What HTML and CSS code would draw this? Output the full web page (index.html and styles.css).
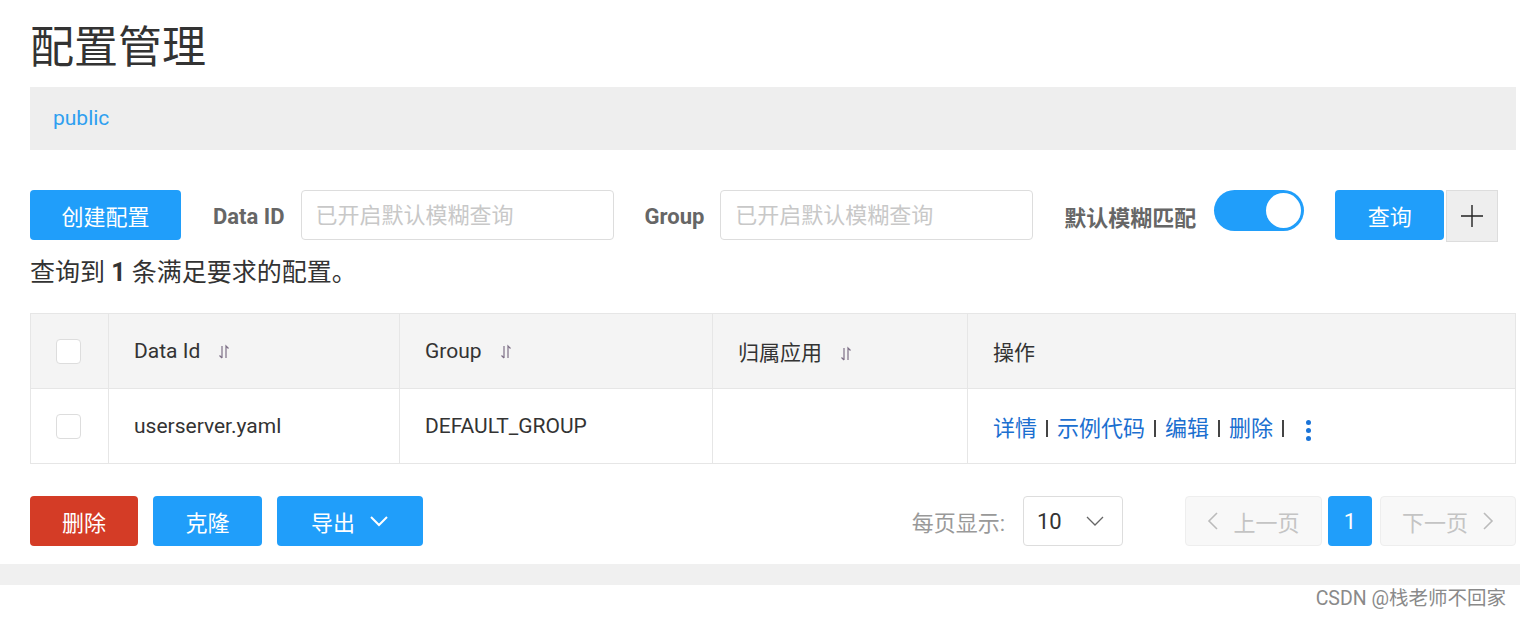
FILE: index.html
```html
<!DOCTYPE html>
<html lang="zh-CN">
<head>
    <meta charset="UTF-8">
    <title>配置管理</title>
    <link rel="stylesheet" href="styles.css">
</head>
<body>

    <div class="page">
        <h1 class="page-title">配置管理</h1>

        <div class="ns-bar">
            <span class="ns-item">public</span>
        </div>

        <div class="toolbar">
            <button class="btn btn-primary btn-create">创建配置</button>
            <label class="field-label">Data ID</label>
            <input class="field-input" type="text" placeholder="已开启默认模糊查询">
            <label class="field-label">Group</label>
            <input class="field-input" type="text" placeholder="已开启默认模糊查询">
            <label class="field-label">默认模糊匹配</label>
            <span class="switch"><span class="switch-knob"></span></span>
            <button class="btn btn-primary btn-query">查询</button>
            <button class="btn-plus">
                <svg width="24" height="24" viewBox="0 0 24 24"><path d="M12 1v22M1 12h22" stroke="#222" stroke-width="1.4" fill="none"/></svg>
            </button>
        </div>

        <p class="summary">查询到 <strong>1</strong> 条满足要求的配置。</p>

        <table class="config-table">
            <colgroup>
                <col style="width:78px">
                <col style="width:291px">
                <col style="width:313px">
                <col style="width:255px">
                <col>
            </colgroup>
            <thead>
                <tr>
                    <th class="cell-check"><span class="checkbox"></span></th>
                    <th>Data Id <span class="sort"><svg width="14" height="16" viewBox="0 0 14 16"><path d="M5 2v12M2.5 11.5L5 14M9 14V2l2.5 2.5" stroke="#7d6f86" stroke-width="1.2" fill="none"/></svg></span></th>
                    <th>Group <span class="sort"><svg width="14" height="16" viewBox="0 0 14 16"><path d="M5 2v12M2.5 11.5L5 14M9 14V2l2.5 2.5" stroke="#7d6f86" stroke-width="1.2" fill="none"/></svg></span></th>
                    <th>归属应用 <span class="sort"><svg width="14" height="16" viewBox="0 0 14 16"><path d="M5 2v12M2.5 11.5L5 14M9 14V2l2.5 2.5" stroke="#7d6f86" stroke-width="1.2" fill="none"/></svg></span></th>
                    <th>操作</th>
                </tr>
            </thead>
            <tbody>
                <tr>
                    <td class="cell-check"><span class="checkbox"></span></td>
                    <td>userserver.yaml</td>
                    <td>DEFAULT_GROUP</td>
                    <td></td>
                    <td class="actions">
                        <a href="#">详情</a><span class="sep"></span><a href="#">示例代码</a><span class="sep"></span><a href="#">编辑</a><span class="sep"></span><a href="#">删除</a><span class="sep"></span>
                        <span class="more"><i></i><i></i><i></i></span>
                    </td>
                </tr>
            </tbody>
        </table>

        <div class="footer-bar">
            <button class="btn btn-danger btn-del">删除</button>
            <button class="btn btn-primary btn-clone">克隆</button>
            <button class="btn btn-primary btn-export">导出
                <svg width="20" height="12" viewBox="0 0 20 12"><path d="M2 2l8 8 8-8" stroke="#fff" stroke-width="2" fill="none"/></svg>
            </button>

            <div class="pager">
                <span class="pager-label">每页显示:</span>
                <span class="page-size">10
                    <svg width="18" height="10" viewBox="0 0 18 10"><path d="M1 1l8 8 8-8" stroke="#666" stroke-width="1.3" fill="none"/></svg>
                </span>
                <span class="page-btn page-prev">
                    <svg width="12" height="20" viewBox="0 0 12 20"><path d="M10 2L2 10l8 8" stroke="#bbb" stroke-width="1.6" fill="none"/></svg>
                    上一页
                </span>
                <span class="page-num">1</span>
                <span class="page-btn page-next">
                    下一页
                    <svg width="12" height="20" viewBox="0 0 12 20"><path d="M2 2l8 8-8 8" stroke="#bbb" stroke-width="1.6" fill="none"/></svg>
                </span>
            </div>
        </div>
    </div>

    <div class="band"></div>
    <div class="watermark">CSDN @栈老师不回家</div>

</body>
</html>
```

FILE: styles.css
```css
body {
    margin: 0;
    font-family: Roboto, "Noto Sans CJK SC", sans-serif;
    color: #333;
    background: #fff;
}
.page {
    padding: 0 4px 0 30px;
}
.page-title {
    margin: 22px 0 13px;
    font-size: 44px;
    font-weight: 400;
    line-height: 52px;
    color: #333;
}
.ns-bar {
    height: 63px;
    line-height: 63px;
    padding-left: 23px;
    background: #eee;
    font-size: 21px;
}
.ns-item {
    color: #2f9ff0;
}
.toolbar {
    display: flex;
    align-items: center;
    margin-top: 40px;
    height: 52px;
}
.toolbar > * {
    flex-shrink: 0;
    white-space: nowrap;
}
.btn {
    height: 50px;
    border: none;
    border-radius: 4px;
    color: #fff;
    font-family: Roboto, "Noto Sans CJK SC", sans-serif;
    font-size: 22px;
    padding: 0;
    cursor: pointer;
}
.btn-primary {
    background: #209efa;
}
.btn-danger {
    background: #d43c26;
}
.btn-create {
    width: 151px;
    margin-right: 32px;
    align-self: flex-start;
}
.field-label {
    font-size: 22px;
    font-weight: 700;
    color: #666;
    margin-right: 16px;
}
.field-input {
    width: 313px;
    height: 50px;
    box-sizing: border-box;
    border: 1px solid #ddd;
    border-radius: 4px;
    padding: 0 14px;
    font-family: Roboto, "Noto Sans CJK SC", sans-serif;
    font-size: 22px;
    margin-right: 31px;
    align-self: flex-start;
}
.field-input::placeholder {
    color: #c8c8c8;
}
.switch {
    position: relative;
    width: 90px;
    height: 41px;
    border-radius: 21px;
    background: #209efa;
    margin: 0 31px 0 2px;
    align-self: flex-start;
}
.switch-knob {
    position: absolute;
    right: 3px;
    top: 3px;
    width: 35px;
    height: 35px;
    border-radius: 50%;
    background: #fff;
}
.btn-query {
    width: 109px;
    align-self: flex-start;
}
.btn-plus {
    width: 52px;
    height: 52px;
    margin-left: 2px;
    background: #eee;
    border: 1px solid #ddd;
    display: flex;
    align-items: center;
    justify-content: center;
    padding: 0;
}
.summary {
    margin: 12px 0 22px;
    font-size: 25px;
    line-height: 37px;
    color: #333;
}
.summary strong {
    font-weight: 700;
}
.config-table {
    width: 100%;
    border-collapse: collapse;
    table-layout: fixed;
    font-size: 21px;
}
.config-table th,
.config-table td {
    height: 74px;
    border: 1px solid #e6e6e6;
    padding: 0 0 0 25px;
    text-align: left;
    font-weight: 400;
    color: #333;
}
.config-table th {
    background: #f4f4f4;
}
.checkbox {
    display: inline-block;
    width: 23px;
    height: 23px;
    border: 1px solid #ddd;
    border-radius: 4px;
    background: #fff;
    vertical-align: middle;
}
.sort {
    display: inline-block;
    margin-left: 12px;
    vertical-align: middle;
}
.sort svg {
    display: block;
}
.actions {
    font-size: 22px;
}
.actions a {
    color: #1b6fd0;
    text-decoration: none;
}
.actions .sep {
    display: inline-block;
    width: 2px;
    height: 17px;
    background: #444;
    margin: 0 9px;
    vertical-align: -1px;
}
.more {
    display: inline-flex;
    flex-direction: column;
    gap: 3px;
    vertical-align: middle;
    margin-left: 7px;
}
.more i {
    width: 5px;
    height: 5px;
    border-radius: 50%;
    background: #1a74d8;
}
.footer-bar {
    display: flex;
    align-items: center;
    margin-top: 32px;
    height: 50px;
}
.btn-del {
    width: 108px;
    margin-right: 15px;
}
.btn-clone {
    width: 109px;
    margin-right: 15px;
}
.btn-export {
    width: 146px;
    display: flex;
    align-items: center;
    justify-content: center;
    gap: 14px;
}
.pager {
    margin-left: auto;
    display: flex;
    align-items: center;
}
.pager-label {
    font-size: 22px;
    color: #999;
    margin-right: 18px;
}
.page-size {
    width: 100px;
    height: 50px;
    box-sizing: border-box;
    border: 1px solid #ddd;
    border-radius: 4px;
    display: flex;
    align-items: center;
    justify-content: space-between;
    padding: 0 18px 0 13px;
    font-size: 22px;
    color: #333;
    margin-right: 62px;
}
.page-btn {
    height: 50px;
    box-sizing: border-box;
    border: 1px solid #eee;
    border-radius: 4px;
    background: #f8f8f8;
    color: #c4c4c4;
    font-size: 22px;
    display: flex;
    align-items: center;
    justify-content: center;
    gap: 14px;
}
.page-prev {
    width: 137px;
}
.page-next {
    width: 136px;
}
.page-num {
    width: 44px;
    height: 50px;
    margin: 0 8px 0 6px;
    border-radius: 4px;
    background: #209efa;
    color: #fff;
    font-size: 22px;
    display: flex;
    align-items: center;
    justify-content: center;
}
.band {
    margin-top: 18px;
    height: 21px;
    background: #f0f0f0;
}
.watermark {
    text-align: right;
    padding-right: 14px;
    font-size: 19.5px;
    line-height: 28px;
    color: #8a8a8a;
}
```
